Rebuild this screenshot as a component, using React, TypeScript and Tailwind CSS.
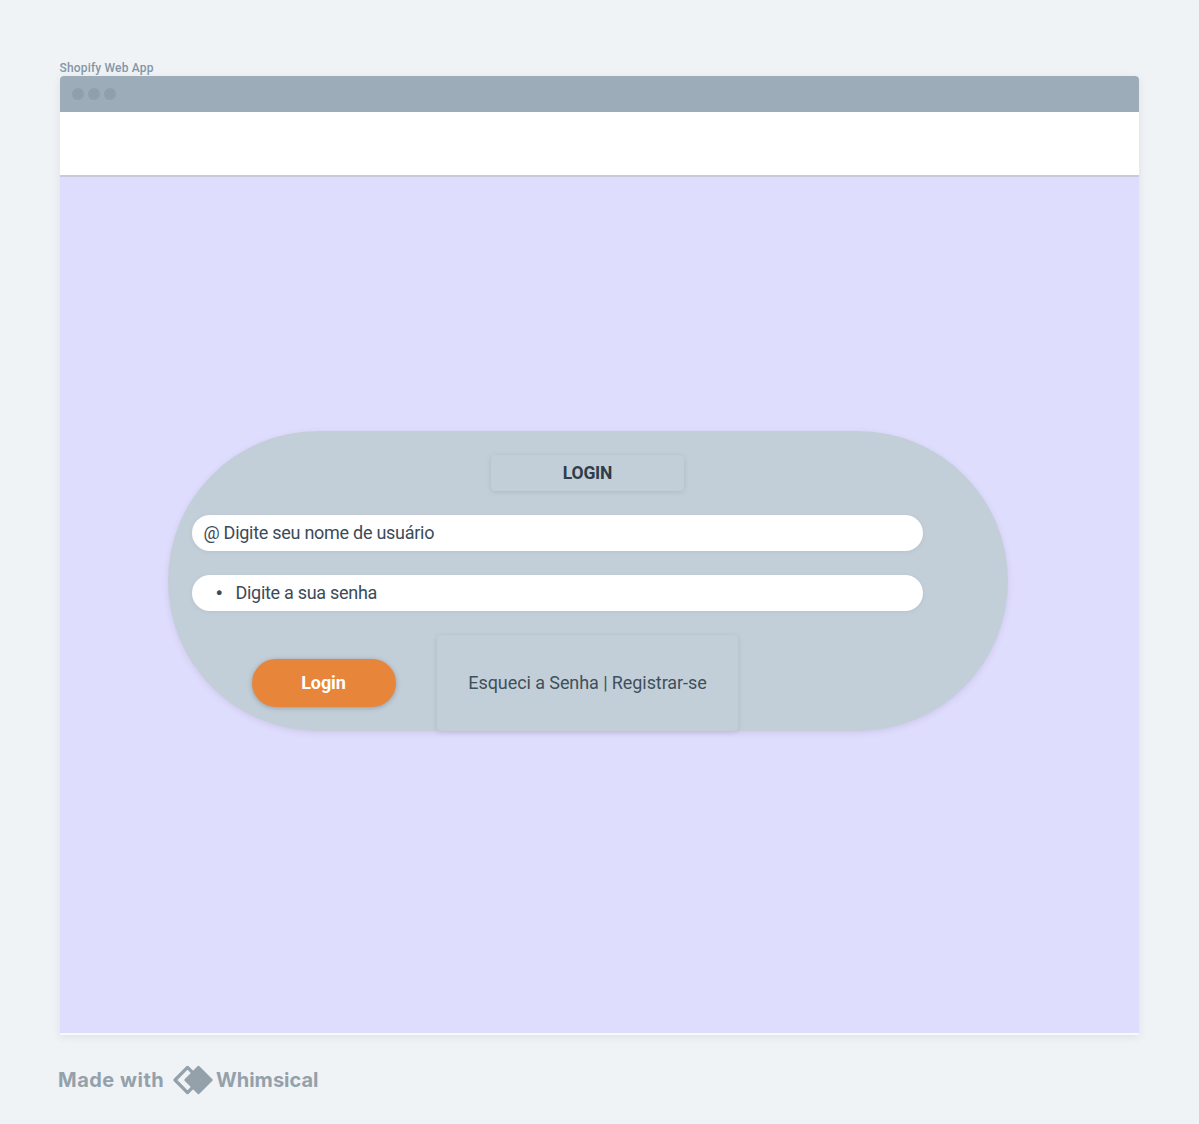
import React from "react";

const field =
  "ml-px flex h-9 w-[731px] items-center rounded-full bg-white pb-[2px] text-[18px] text-[#3b4b59] shadow-[0_1px_4px_rgba(60,80,100,0.09)]";

function WindowBar() {
  return (
    <div className="flex h-9 shrink-0 items-center gap-1 bg-[#9dacb9] pl-[11.5px]">
      <span className="size-3 rounded-full bg-[#8e9fad]" />
      <span className="size-3 rounded-full bg-[#8e9fad]" />
      <span className="size-3 rounded-full bg-[#8e9fad]" />
    </div>
  );
}

function LoginCard() {
  return (
    <div className="ml-[107.5px] mt-[254px] h-[300px] w-[840px] rounded-full bg-[#c3cfd8] shadow-[0_2px_6px_rgba(80,50,110,0.12)]">
      <div className="flex h-full flex-col pl-[23.5px] pt-6">
        <h1 className="ml-[300px] flex h-9 w-[193px] items-center justify-center rounded-[4px] text-[17.5px] font-bold text-[#2e3d49] shadow-[0_1px_5px_rgba(60,80,100,0.17)]">
          <span className="tracking-[-0.2px]">LOGIN</span>
        </h1>
        <div className={`${field} mt-6 pl-[11.5px]`}>
          <span className="tracking-[-0.27px]">@ Digite seu nome de usuário</span>
        </div>
        <div className={`${field} mt-6 pl-[23px]`}>
          <span className="mr-[13.5px] w-[7px] text-center font-['Inter',sans-serif] text-[15px]">•</span>
          <span className="tracking-[-0.29px]">Digite a sua senha</span>
        </div>
        <div className="mt-6 flex gap-[41.5px] pl-[60.5px]">
          <button className="mt-6 h-12 w-[144px] rounded-full bg-[#e7853b] pb-[2px] text-[18px] font-bold text-white shadow-[0_1px_5px_rgba(50,70,90,0.35)]">
            <span className="tracking-[-0.1px]">Login</span>
          </button>
          <div className="flex h-24 w-[301px] items-center justify-center rounded-[4px] bg-[#c3cfd8] pb-[2px] text-[18px] text-[#3f4f5c] shadow-[0_1px_5px_rgba(60,70,100,0.17)]">
            <span className="tracking-[-0.08px]">Esqueci a Senha | Registrar-se</span>
          </div>
        </div>
      </div>
    </div>
  );
}

function Attribution() {
  return (
    <footer className="-ml-[2px] mt-[30px] flex h-[30px] items-center font-['Inter',sans-serif] text-[20px] font-bold leading-[30px] text-[#94a1ab]">
      <span className="w-[114px] whitespace-nowrap tracking-[0.5px]">Made with</span>
      <svg className="h-[30px] w-[42px] shrink-0" viewBox="0 0 42 30" fill="none">
        <path
          d="M15.5 2.4 3 15l12.5 12.6L28 15Z"
          stroke="#94a1ab"
          strokeWidth="3.3"
          strokeLinejoin="round"
        />
        <path
          d="M26.5 1.8 39.7 15 26.5 28.2 13.3 15Z"
          fill="#94a1ab"
          stroke="#94a1ab"
          strokeWidth="2"
          strokeLinejoin="round"
        />
      </svg>
      <span className="ml-[2px] whitespace-nowrap">Whimsical</span>
    </footer>
  );
}

export default function App() {
  return (
    <main className="h-[1124px] w-[1199px] overflow-hidden bg-[#eff3f6] pl-[60px] pt-[61px] font-['Roboto',sans-serif]">
      <div className="-ml-[0.5px] h-[15px] text-[12px] font-medium leading-[15px] tracking-[0.17px] text-[#8496a5]">
        <span>Shopify Web App</span>
      </div>
      <section className="flex h-[959px] w-[1079px] flex-col overflow-hidden rounded-t-[4px] border-b-2 border-[#f8f9fa] bg-white shadow-[0_2px_8px_rgba(60,80,90,0.1)]">
        <WindowBar />
        <div className="h-[65px] shrink-0 border-b-2 border-[#c8cadb] bg-white" />
        <div className="flex-1 bg-[#dfddfd]">
          <LoginCard />
        </div>
      </section>
      <Attribution />
    </main>
  );
}
